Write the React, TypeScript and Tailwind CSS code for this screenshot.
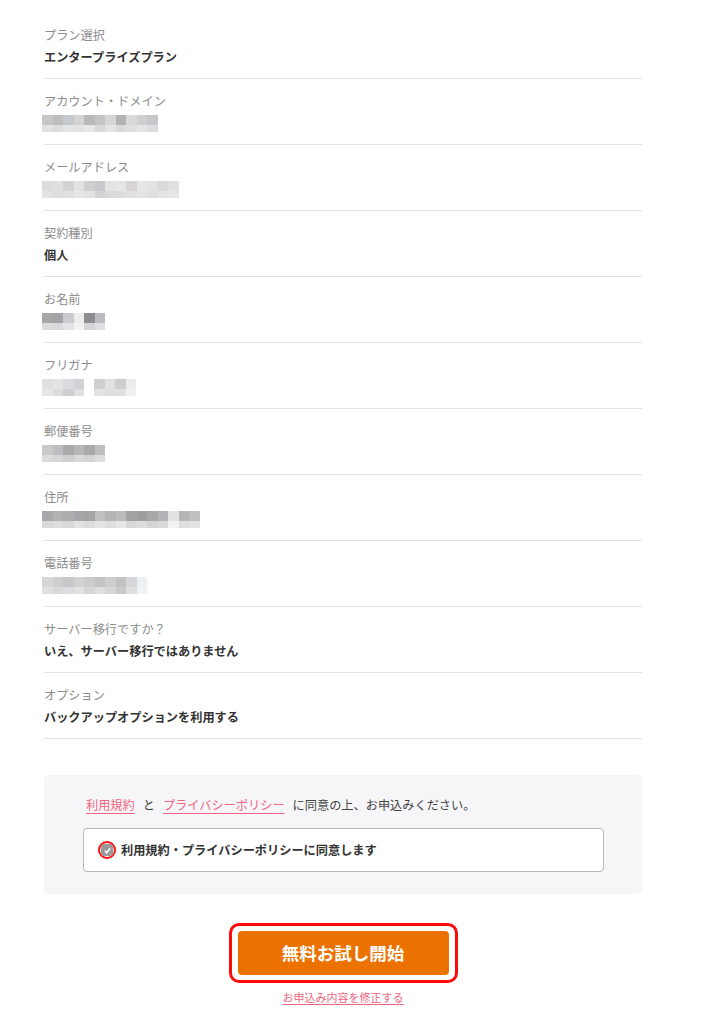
const font = { fontFamily: '"Noto Sans CJK JP", "Noto Sans", sans-serif' };

type Cell = string;

// pixelated placeholder for masked values: two rows of grey squares
function Mosaic({ top, bottom }: { top: Cell[]; bottom: Cell[] }) {
  return (
    <div className="flex flex-col">
      <div className="flex">
        {top.map((c, i) => (
          <div key={i} className={`h-[10px] w-[10.5px] ${c}`} />
        ))}
      </div>
      <div className="flex">
        {bottom.map((c, i) => (
          <div key={i} className={`h-[7px] w-[10.5px] ${c}`} />
        ))}
      </div>
    </div>
  );
}

interface Row {
  label: string;
  value?: string;
  masks?: { top: Cell[]; bottom: Cell[] }[];
}

const rows: Row[] = [
  { label: 'プラン選択', value: 'エンタープライズプラン' },
  {
    label: 'アカウント・ドメイン',
    masks: [
      {
        top: ['bg-[#c6c6c8]', 'bg-[#bdbdbf]', 'bg-[#c5c8cc]', 'bg-[#d4d4d4]', 'bg-[#b9b9bb]', 'bg-[#c4c4c6]', 'bg-[#d6d6d8]', 'bg-[#b2b2b4]', 'bg-[#d9d9d9]', 'bg-[#cfcfd1]', 'bg-[#c5c7cb]'],
        bottom: ['bg-[#e3e3e3]', 'bg-[#dcdcdc]', 'bg-[#e5e5e7]', 'bg-[#e2e2e2]', 'bg-[#e6e6e6]', 'bg-[#d8d8d8]', 'bg-[#e4e4e6]', 'bg-[#dadada]', 'bg-[#e0e0e0]', 'bg-[#e5e5e5]', 'bg-[#dddde0]'],
      },
    ],
  },
  {
    label: 'メールアドレス',
    masks: [
      {
        top: ['bg-[#dcdcdc]', 'bg-[#e0e0e0]', 'bg-[#d2d2d4]', 'bg-[#e2e2e4]', 'bg-[#cfcfd1]', 'bg-[#c9c9cb]', 'bg-[#e3e3e3]', 'bg-[#e5e5e5]', 'bg-[#d7d5d3]', 'bg-[#e6e6e8]', 'bg-[#e2e2e2]', 'bg-[#d9d9d9]', 'bg-[#e0e0e0]'],
        bottom: ['bg-[#e4e4e4]', 'bg-[#dedede]', 'bg-[#e1e1e3]', 'bg-[#e6e6e8]', 'bg-[#e2e2e2]', 'bg-[#d4d4d6]', 'bg-[#dadada]', 'bg-[#dcdcdc]', 'bg-[#e0e0e0]', 'bg-[#e3e3e3]', 'bg-[#dfdfdf]', 'bg-[#e4e4e4]', 'bg-[#e6e6e6]'],
      },
    ],
  },
  { label: '契約種別', value: '個人' },
  {
    label: 'お名前',
    masks: [
      {
        top: ['bg-[#a8a6a6]', 'bg-[#a4a4a6]', 'bg-[#cbcbcf]', 'bg-[#ededed]', 'bg-[#8e8e92]', 'bg-[#bdbdc1]'],
        bottom: ['bg-[#dcdcdc]', 'bg-[#d8d8da]', 'bg-[#e4e4e6]', 'bg-[#f3f3f3]', 'bg-[#d5d5d7]', 'bg-[#e0e0e2]'],
      },
    ],
  },
  {
    label: 'フリガナ',
    masks: [
      {
        top: ['bg-[#e0e0e0]', 'bg-[#e4e4e4]', 'bg-[#dadade]', 'bg-[#d2d2d6]'],
        bottom: ['bg-[#e6e6e6]', 'bg-[#dcdcdc]', 'bg-[#cfcfcf]', 'bg-[#e0e0e2]'],
      },
      {
        top: ['bg-[#cfcfd1]', 'bg-[#e2e2e2]', 'bg-[#cdcdcf]', 'bg-[#ececec]'],
        bottom: ['bg-[#e2e2e2]', 'bg-[#dedede]', 'bg-[#e0e0e0]', 'bg-[#f0f0f0]'],
      },
    ],
  },
  {
    label: '郵便番号',
    masks: [
      {
        top: ['bg-[#c9c9c9]', 'bg-[#bdbdbf]', 'bg-[#a9a9ab]', 'bg-[#b7b7b9]', 'bg-[#a8a8aa]', 'bg-[#bfbfbf]'],
        bottom: ['bg-[#dcdcdc]', 'bg-[#d6d6d6]', 'bg-[#cfcfd1]', 'bg-[#d9d9d9]', 'bg-[#d3d3d5]', 'bg-[#dddddd]'],
      },
    ],
  },
  {
    label: '住所',
    masks: [
      {
        top: ['bg-[#a8a8aa]', 'bg-[#b2b2b4]', 'bg-[#adadad]', 'bg-[#a6a6a8]', 'bg-[#a4a4a6]', 'bg-[#bfbfc1]', 'bg-[#b5b5b7]', 'bg-[#bcbcbe]', 'bg-[#a3a3a5]', 'bg-[#9e9ea0]', 'bg-[#a7a7a9]', 'bg-[#b4b4b6]', 'bg-[#e2e2e2]', 'bg-[#b5b5b5]', 'bg-[#c0c0c0]'],
        bottom: ['bg-[#dadada]', 'bg-[#dedede]', 'bg-[#d8d8da]', 'bg-[#e2e2e2]', 'bg-[#dcdcdc]', 'bg-[#e4e4e4]', 'bg-[#dedee0]', 'bg-[#e6e6e6]', 'bg-[#d8d8d8]', 'bg-[#dcdcde]', 'bg-[#d4d4d4]', 'bg-[#dadada]', 'bg-[#f2f2f2]', 'bg-[#dedede]', 'bg-[#e2e2e2]'],
      },
    ],
  },
  {
    label: '電話番号',
    masks: [
      {
        top: ['bg-[#d6d6d6]', 'bg-[#cfcfd1]', 'bg-[#c7c7c9]', 'bg-[#d2d2d2]', 'bg-[#cbcbcb]', 'bg-[#c3c3c5]', 'bg-[#cdcdcf]', 'bg-[#c2c2c2]', 'bg-[#d6d6d8]', 'bg-[#eef0f4]'],
        bottom: ['bg-[#e0e0e0]', 'bg-[#d9d9d9]', 'bg-[#dcdcde]', 'bg-[#e2e2e2]', 'bg-[#d6d6d6]', 'bg-[#dedede]', 'bg-[#d7d7d9]', 'bg-[#cacaca]', 'bg-[#dfdfe1]', 'bg-[#f2f3f6]'],
      },
    ],
  },
  { label: 'サーバー移行ですか？', value: 'いえ、サーバー移行ではありません' },
  { label: 'オプション', value: 'バックアップオプションを利用する' },
];

function CheckIcon() {
  return (
    <svg width="9" height="9" viewBox="0 0 12 12" fill="none" stroke="white" strokeWidth="2" aria-hidden="true">
      <path d="M2.5 6.5 5 9l4.5-6" />
    </svg>
  );
}

export default function App() {
  return (
    <div className="min-h-[1024px] w-[704px] bg-white pt-[13px] text-[12.2px]" style={font}>
      <div className="ml-[44px] w-[598px]">
        {rows.map((r) => (
          <div key={r.label} className="border-b border-[#e2e2e2] pb-[10px] pt-[11px]">
            <div className="h-[22px] leading-[22px] text-[#8c8c8c]">{r.label}</div>
            <div className="flex h-[22px] items-center">
              {r.value ? (
                <span className="font-bold leading-[22px] text-[#333]">{r.value}</span>
              ) : (
                <div className="-ml-[2px] flex gap-[10px]">
                  {r.masks?.map((m, i) => <Mosaic key={i} top={m.top} bottom={m.bottom} />)}
                </div>
              )}
            </div>
          </div>
        ))}

        <div className="mt-[36px] rounded-[5px] bg-[#f6f6f9] pb-[22px] pl-[39px] pr-[38px] pt-[19px]">
          <p className="flex h-[22px] items-center pl-[3px] leading-[22px] text-[#444]">
            <a className="text-[#f0667e] underline underline-offset-[3px]">利用規約</a>
            <span className="mx-[8px]">と</span>
            <a className="text-[#f0667e] underline underline-offset-[3px]">プライバシーポリシー</a>
            <span className="ml-[8px]">に同意の上、お申込みください。</span>
          </p>
          <label className="mt-[12px] flex h-[44px] items-center rounded-[4px] border border-[#b8b8b8] bg-white pl-[14px]">
            <span className="flex h-[18px] w-[18px] items-center justify-center rounded-full border-2 border-[#ff1010]">
              <span className="flex h-[12px] w-[12px] items-center justify-center rounded-[3px] bg-[#9a9a9a]">
                <CheckIcon />
              </span>
            </span>
            <span className="ml-[5px] font-bold text-[#333]">利用規約・プライバシーポリシーに同意します</span>
          </label>
        </div>

        <div className="mt-[29px] flex flex-col items-center">
          <div className="rounded-[10px] border-[3px] border-[#ff0a0a] px-[6px] py-[5px]">
            <button
              type="button"
              className="flex h-[44px] w-[211px] items-center justify-center rounded-[4px] bg-[#ec7200] text-[17.5px] font-bold text-white"
            >
              無料お試し開始
            </button>
          </div>
          <a className="mt-[5px] text-[11px] leading-[18px] text-[#f0667e] underline underline-offset-[2px]">
            お申込み内容を修正する
          </a>
        </div>
      </div>
    </div>
  );
}
